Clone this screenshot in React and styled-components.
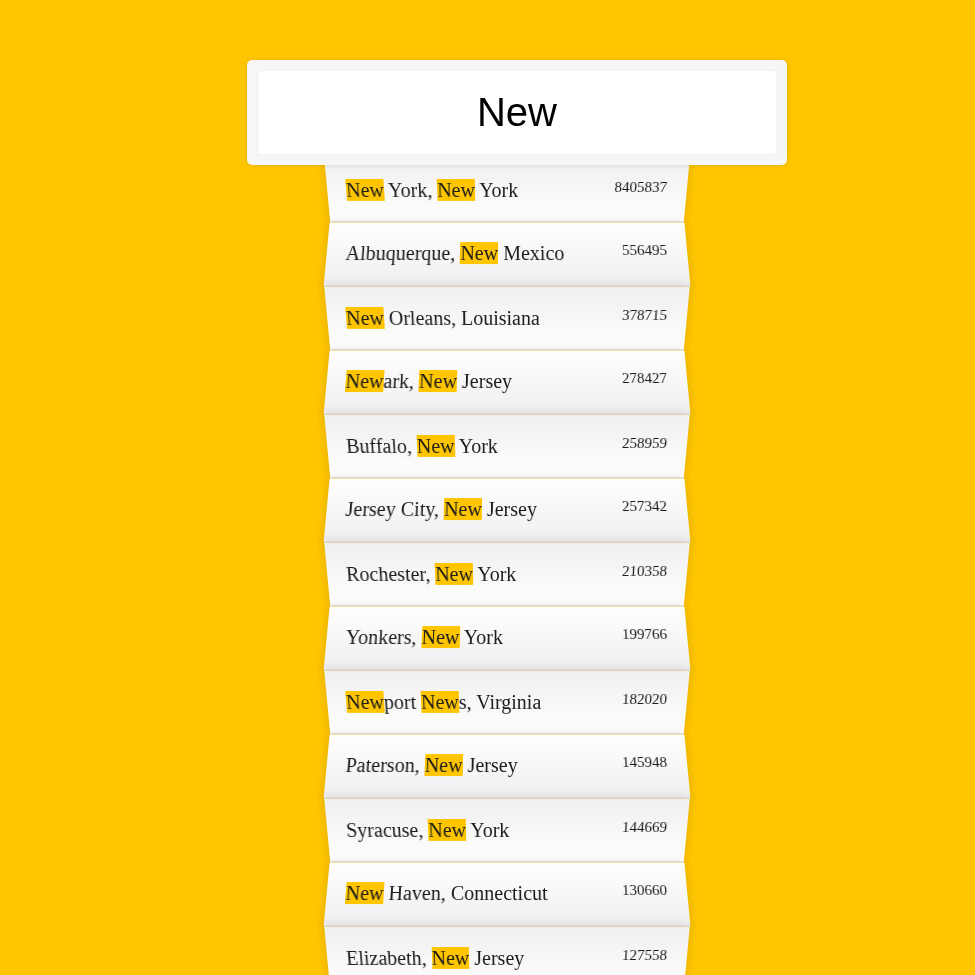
import React from 'react';
import styled, { createGlobalStyle } from 'styled-components';

const GlobalStyle = createGlobalStyle`
  html {
    box-sizing: border-box;
    background: #ffc600;
    font-family: "Liberation Serif", "Times New Roman", serif;
    font-size: 20px;
    overflow: hidden;
  }
  *, *:before, *:after {
    box-sizing: inherit;
  }
  body {
    margin: 0;
  }
`;

const SearchForm = styled.form`
  width: 540px;
  margin: 60px 0 0 247px;
`;

const SearchInput = styled.input`
  display: block;
  position: relative;
  z-index: 2;
  width: 100%;
  height: 105px;
  margin: 0 0 -9px 0;
  padding: 20px;
  border: 10px solid #f6f6f6;
  border-radius: 5px;
  outline: 0;
  background: #fff;
  text-align: center;
  font-family: "Liberation Sans", Arial, sans-serif;
  font-size: 40px;
  color: #000;
  box-shadow: 0 0 5px rgba(0, 0, 0, 0.12), inset 0 0 2px rgba(0, 0, 0, 0.19);
`;

const Suggestions = styled.ul`
  width: 360px;
  margin: 0 0 0 80px;
  padding: 0;
  position: relative;
`;

const Suggestion = styled.li`
  list-style: none;
  margin: 0;
  padding: 20px 20px 20px 19px;
  display: flex;
  justify-content: space-between;
  color: #1a1a1a;
  border-bottom: 1px solid #d8d8d8;
  box-shadow: 0 0 10px rgba(0, 0, 0, 0.14);
  text-transform: capitalize;

  &:nth-child(even) {
    transform: perspective(100px) rotateX(3deg) translateY(2px) scale(1.001);
    background: linear-gradient(to bottom, #ffffff 0%, #efefef 100%);
  }

  &:nth-child(odd) {
    transform: perspective(100px) rotateX(-3deg) translateY(3px);
    background: linear-gradient(to top, #ffffff 0%, #efefef 100%);
  }
`;

const Population = styled.span`
  font-size: 15px;
`;

const Highlight = styled.span`
  background: #ffc600;
`;

const cities = [
  ['New York', 'New York', '8405837'],
  ['Albuquerque', 'New Mexico', '556495'],
  ['New Orleans', 'Louisiana', '378715'],
  ['Newark', 'New Jersey', '278427'],
  ['Buffalo', 'New York', '258959'],
  ['Jersey City', 'New Jersey', '257342'],
  ['Rochester', 'New York', '210358'],
  ['Yonkers', 'New York', '199766'],
  ['Newport News', 'Virginia', '182020'],
  ['Paterson', 'New Jersey', '145948'],
  ['Syracuse', 'New York', '144669'],
  ['New Haven', 'Connecticut', '130660'],
  ['Elizabeth', 'New Jersey', '127558'],
  ['Las Cruces', 'New Mexico', '101324'],
  ['Albany', 'New York', '98424'],
];

const term = 'New';

// split text on the search term and wrap matches
const highlight = (text) => {
  const parts = text.split(new RegExp(`(${term})`, 'g'));
  return parts.map((part, i) =>
    part === term ? <Highlight key={i}>{part}</Highlight> : part
  );
};

const App = () => {
  return (
    <>
      <GlobalStyle />
      <SearchForm onSubmit={(e) => e.preventDefault()}>
        <SearchInput type="text" defaultValue={term} placeholder="City or State" />
        <Suggestions>
          {cities.map(([city, state, pop]) => (
            <Suggestion key={city}>
              <span>{highlight(`${city}, ${state}`)}</span>
              <Population>{pop}</Population>
            </Suggestion>
          ))}
        </Suggestions>
      </SearchForm>
    </>
  );
};

export default App;
